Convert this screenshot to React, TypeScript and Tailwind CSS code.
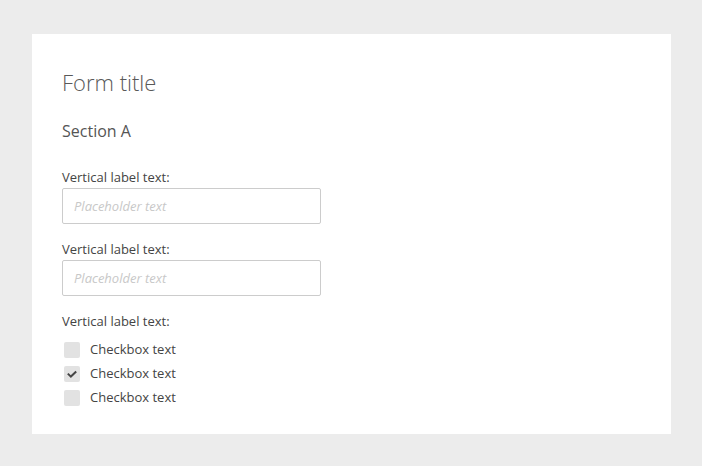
import React from "react";

const font = { fontFamily: '"Open Sans", sans-serif' };

function Check({ checked }: { checked?: boolean }) {
  return (
    <div className="w-4 h-4 rounded-[2px] bg-[#e2e2e2] flex items-center justify-center">
      {checked && (
        <svg width="12" height="12" viewBox="0 0 12 12">
          <path d="M1.8 5.6 L4.9 8.6 L10.2 3.6" fill="none" stroke="#444" strokeWidth="2" />
        </svg>
      )}
    </div>
  );
}

export default function App() {
  return (
    <div className="w-[702px] h-[466px] bg-[#ececec] pt-[34px] pl-[32px]" style={font}>
      <div className="w-[639px] h-[400px] bg-white px-[30px] pt-[33px] text-[#555]">
        <h1 className="text-[22px] font-light leading-[30px] text-[#595959]">Form title</h1>
        <h2 className="text-[16px] leading-[22px] mt-[23px] text-[#555]">Section A</h2>
        <div className="mt-[26px] flex flex-col">
          <label className="text-[13px] leading-[18px] text-[#444]">Vertical label text:</label>
          <input
            className="mt-[2px] w-[259px] h-[36px] border border-[#ccc] rounded-[2px] px-[11px] text-[13px] italic placeholder:text-[#c8c8c8] outline-none"
            placeholder="Placeholder text"
            style={font}
          />
          <label className="mt-[16px] text-[13px] leading-[18px] text-[#444]">Vertical label text:</label>
          <input
            className="mt-[2px] w-[259px] h-[36px] border border-[#ccc] rounded-[2px] px-[11px] text-[13px] italic placeholder:text-[#c8c8c8] outline-none"
            placeholder="Placeholder text"
            style={font}
          />
          <label className="mt-[16px] text-[13px] leading-[18px] text-[#444]">Vertical label text:</label>
          <div className="mt-[12px] flex flex-col gap-[8px]">
            {[false, true, false].map((c, i) => (
              <div key={i} className="flex items-center h-[16px] pl-[2px]">
                <Check checked={c} />
                <span className="ml-[10px] text-[13px] text-[#444]">Checkbox text</span>
              </div>
            ))}
          </div>
        </div>
      </div>
    </div>
  );
}
